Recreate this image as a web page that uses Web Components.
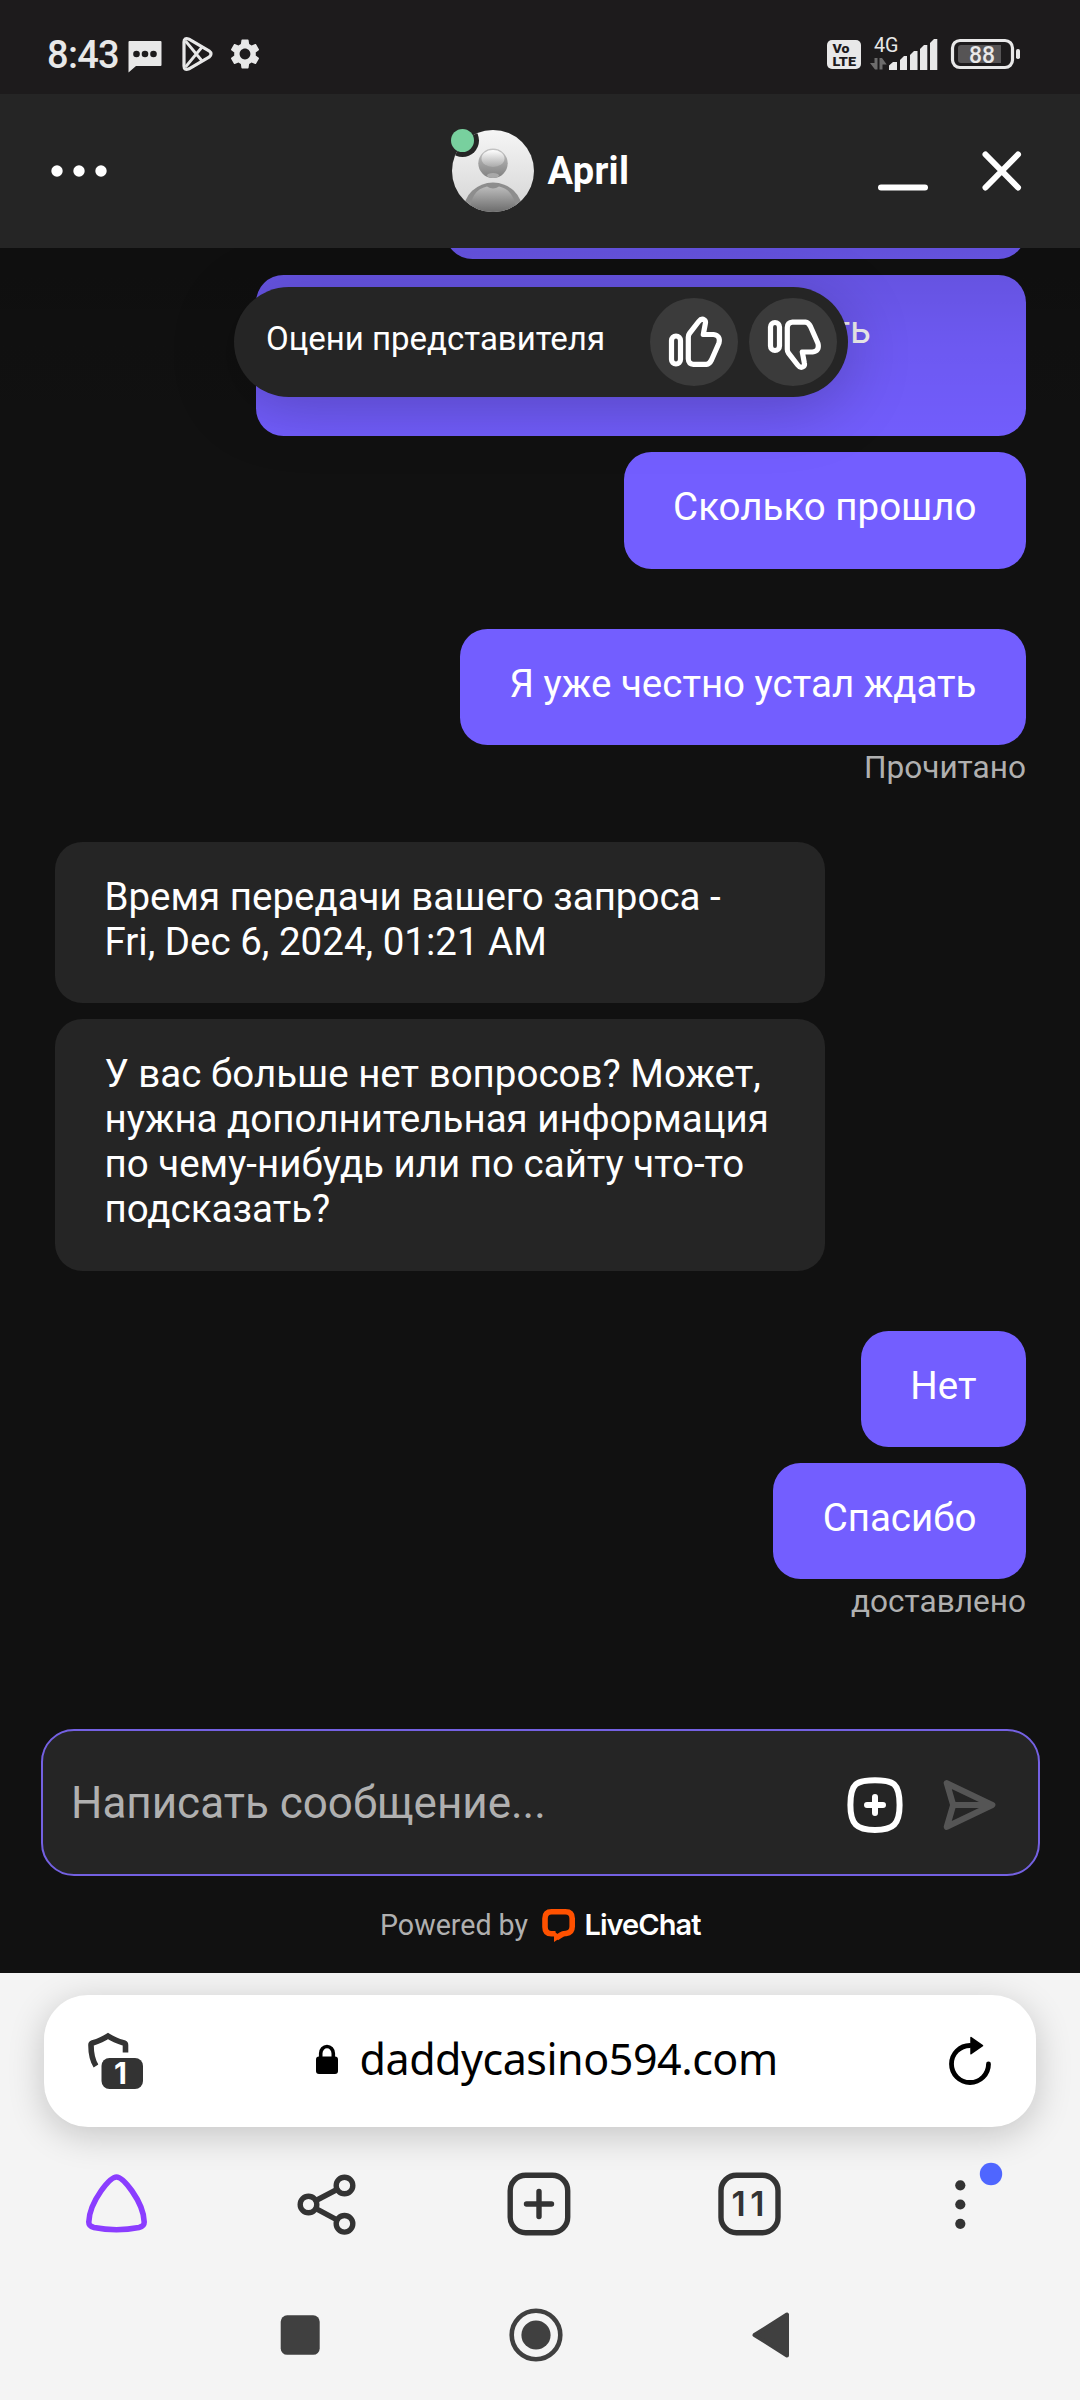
<!DOCTYPE html>
<html lang="ru">
<head>
<meta charset="utf-8">
<title>April</title>
<style>
html,body{margin:0;padding:0;background:#111}
body{width:1080px;height:2400px;overflow:hidden;font-family:Roboto,"Noto Sans",sans-serif}
</style>
</head>
<body>
<phone-screen></phone-screen>
<script>
const define = (name, css, html) => customElements.define(name, class extends HTMLElement {
  constructor() {
    super();
    this.attachShadow({mode: 'open'}).innerHTML =
      `<style>:host{display:block;box-sizing:border-box}*{box-sizing:border-box}svg{display:block;flex:none;overflow:visible}${css}</style>${html}`;
  }
});

define('status-bar', `
:host{display:flex;align-items:flex-start;height:94px;position:relative;z-index:4;background:#1d1b1c;color:#e8e8e8;padding-left:47px}
.clock{font-size:38px;line-height:44px;font-weight:500;width:80px;margin-top:33px;letter-spacing:-.7px;white-space:nowrap}
text{font-family:Roboto,sans-serif}`, `
<span class="clock">8:43</span>
<svg width="35" height="94" viewBox="127 0 35 94"><path fill="#e8e8e8" d="M129.500 41h31q1 0 1 1v23q0 1-1 1h-24.500l-7.500 6.500v-30.500q0-1 1-1z"/><g fill="#1d1b1c"><circle cx="136.500" cy="54" r="3.300"/><circle cx="145" cy="54" r="3.300"/><circle cx="153.500" cy="54" r="3.300"/></g></svg>
<svg width="64" height="94" viewBox="162 0 64 94"><g fill="none" stroke="#e8e8e8" stroke-width="3.200" stroke-linejoin="round"><path d="M184 42q0-5 5-2.800l20 11.600q4 3 0 6.400l-20 11.600q-5 2.200-5-2.800z"/><path d="M185.500 41L202.500 61.500M185.500 67L202.500 46.500" stroke-width="2.800"/></g></svg>
<svg width="40" height="94" viewBox="226 0 40 94"><g transform="translate(227 36) scale(1.500)"><path fill="#e8e8e8" d="M19.140 12.940c.04-.3.060-.610.060-.940 0-.320-.020-.640-.070-.940l2.030-1.580c.180-.140.230-.410.120-.610l-1.920-3.320c-.120-.220-.370-.290-.590-.220l-2.390.960c-.5-.380-1.030-.7-1.620-.940L14.400 2.810c-.040-.240-.240-.410-.480-.410h-3.840c-.24 0-.43.170-.47.410L9.250 5.350C8.660 5.590 8.120 5.920 7.630 6.290L5.240 5.330c-.22-.080-.47 0-.59.220L2.740 8.870c-.12.210-.08.470.12.610l2.030 1.580c-.05.3-.09.630-.09.940s.02.640.07.940l-2.030 1.580c-.18.140-.23.410-.12.610l1.920 3.320c.12.220.37.290.59.220l2.390-.96c.5.380 1.030.7 1.620.94l.36 2.540c.05.240.24.410.48.410h3.840c.24 0 .44-.17.47-.41l.36-2.540c.59-.24 1.130-.56 1.620-.94l2.390.96c.22.080.47 0 .59-.22l1.920-3.320c.12-.22.070-.47-.12-.61L19.140 12.940zM12 15.600c-1.980 0-3.600-1.620-3.600-3.600s1.620-3.600 3.600-3.600 3.600 1.620 3.600 3.600-1.620 3.600-3.600 3.600z"/></g></svg>
<svg style="margin-left:554px" width="48" height="94" viewBox="820 0 48 94"><rect x="827" y="40" width="34" height="29" rx="5" fill="#e8e8e8"/><g fill="#1d1b1c" style="font-weight:900;font-size:12px"><text x="832.500" y="53" textLength="17" lengthAdjust="spacingAndGlyphs">Vo</text><text x="832.500" y="65.500" textLength="23.500" lengthAdjust="spacingAndGlyphs">LTE</text></g></svg>
<svg width="72" height="94" viewBox="868 0 72 94"><text x="874" y="52.300" font-size="20" fill="#e8e8e8" textLength="24.500" lengthAdjust="spacingAndGlyphs">4G</text><path fill="#6d6c6c" d="M874.500 58h3v11.500h-2.500l-5-6.500h4.500zM879.500 69.500h3v-5h4.200l-4.700-6.500h-2.500z"/><g fill="#e8e8e8"><path d="M889 70v-4.500l4-3.500h4v8zM900 70v-10l4-4h3v14zM910 70v-15l4-4h3.500v19zM920 70v-21l4-4h3.300v25zM930 70v-27l4-4h3.300v31z"/></g></svg>
<svg width="90" height="94" viewBox="940 0 90 94"><rect x="952.500" y="40.500" width="60" height="27" rx="7.500" fill="none" stroke="#e8e8e8" stroke-width="3.200"/><path fill="#565455" d="M961 45h40v18h-40q-3 0-3-3v-12q0-3 3-3z"/><rect x="1016" y="49" width="4" height="10" rx="1.800" fill="#e8e8e8"/><text x="969" y="63" font-size="23" font-weight="500" fill="#e8e8e8" textLength="26" lengthAdjust="spacingAndGlyphs">88</text></svg>`);

define('agent-avatar', ``, `
<svg width="86" height="86" viewBox="450 128 86 86">
<defs><linearGradient id="bg" x1="0" y1="0" x2="0" y2="1"><stop offset="0" stop-color="#f6f6f6"/><stop offset="1" stop-color="#d4d4d4"/></linearGradient>
<linearGradient id="hd" x1="0" y1="0" x2="0" y2="1"><stop offset="0" stop-color="#c4c4c4"/><stop offset="1" stop-color="#808080"/></linearGradient>
<linearGradient id="hl" x1="0" y1="0" x2="0" y2="1"><stop offset="0" stop-color="#fff"/><stop offset="1" stop-color="#aaa"/></linearGradient>
<linearGradient id="bd" x1="0" y1="0" x2="0" y2="1"><stop offset="0" stop-color="#bcbcbc"/><stop offset="1" stop-color="#666"/></linearGradient>
<clipPath id="c"><circle cx="493" cy="171" r="41"/></clipPath></defs>
<g clip-path="url(#c)"><rect x="450" y="128" width="86" height="86" fill="url(#bg)"/>
<circle cx="493" cy="163.300" r="14.700" fill="url(#hd)"/><ellipse cx="493" cy="158.500" rx="11.500" ry="8.500" fill="url(#hl)"/><ellipse cx="493" cy="175.500" rx="6" ry="2.500" fill="#a9a9a9"/>
<ellipse cx="493" cy="211" rx="29.500" ry="28.500" fill="#8d8d8d"/><path d="M470 214q0-24 17-27.500 6 4 12 0 17 3.500 17 27.500z" fill="url(#bd)"/>
<circle cx="462.500" cy="140.500" r="16.500" fill="#252525"/></g><circle cx="462.500" cy="140.500" r="11.500" fill="#78d09e"/></svg>`);

define('chat-header', `
:host{display:flex;align-items:center;height:154px;background:#252525;color:#fff;position:relative;z-index:2;padding:0 50px}
.left,.right{flex:1;display:flex;align-items:center}
.right{justify-content:flex-end;gap:48px}
.mid{display:flex;align-items:center;gap:12px;font-size:38px;font-weight:700;line-height:44px}
.mid span{width:83px;letter-spacing:.3px}`, `
<div class="left"><svg width="58" height="12" viewBox="50 165 58 12" fill="#fff"><circle cx="57" cy="171" r="5.700"/><circle cx="79" cy="171" r="5.700"/><circle cx="101" cy="171" r="5.700"/></svg></div>
<div class="mid"><agent-avatar></agent-avatar><span>April</span></div>
<div class="right"><svg width="62" height="50" viewBox="872 146 62 50"><path d="M881 187.500h44" stroke="#fff" stroke-width="6" stroke-linecap="round"/></svg>
<svg width="48" height="50" viewBox="982 146 48 50"><path d="M985.500 154.500l32.500 33M1018 154.500l-32.500 33" stroke="#fff" stroke-width="6" stroke-linecap="round"/></svg></div>`);

define('chat-bubble', `
:host{width:fit-content;max-width:770px;padding:32px 49.500px 39.500px;border-radius:27.500px;background:#252525;color:#fff;font-size:38.500px;line-height:45px}
:host([mine]){background:#735eff;align-self:flex-end}
:host([wide]){width:770px}`, `<slot></slot>`);

define('chat-group', `
:host{display:flex;flex-direction:column;gap:15.800px;margin-bottom:60px}
:host([status]){margin-bottom:0}`, `<slot></slot>`);

define('receipt-note', `
:host{align-self:flex-end;margin-top:-11.100px;height:92.100px;font-size:31.600px;line-height:36px;color:#b0b0b0}`, `<slot></slot>`);

define('rate-button', `
:host{width:88px;height:88px;border-radius:50%;background:#3b3b3b}`, `<slot></slot>`);

define('rate-agent', `
:host{position:absolute;left:234px;top:39px;z-index:3;width:614px;height:110px;border-radius:55px;background:#252525;color:#fff;display:flex;align-items:center;justify-content:space-between;padding:0 11px 0 32px;box-shadow:0 11px 66px rgba(0,0,0,.22)}
span{font-size:33px;line-height:40px;margin-top:-6px}
div{display:flex;gap:11px}
g{fill:none;stroke:#fff;stroke-width:5.200;stroke-linejoin:round}`, `
<span>Оцени представителя</span>
<div><rate-button><svg width="88" height="88" viewBox="650 298 88 88"><g><rect x="671.500" y="336" width="9" height="28" rx="4.500"/><path d="M688.300 337q0-2 1.200-3.600L698.700 321.500Q701.500 317.800 704.500 320Q706 321.200 705.300 323.800L703.300 334.500H713.500Q720.800 335.500 719 343L711.500 360Q709.500 364 706.500 364.300H693.500Q688.500 364 688.300 359Z"/></g></svg></rate-button>
<rate-button><svg width="88" height="88" viewBox="749 298 88 88"><g transform="translate(99 686.500) scale(1 -1)"><rect x="671.500" y="336" width="9" height="28" rx="4.500"/><path d="M688.300 337q0-2 1.200-3.600L698.700 321.500Q701.500 317.800 704.500 320Q706 321.200 705.300 323.800L703.300 334.500H713.500Q720.800 335.500 719 343L711.500 360Q709.500 364 706.500 364.300H693.500Q688.500 364 688.300 359Z"/></g></svg></rate-button></div>`);

define('message-list', `
:host{position:relative;height:1481px;overflow:hidden;padding:0 54px 0 55px}
.list{margin-top:-105.600px;display:flex;flex-direction:column}
.shade{position:absolute;inset:0 0 auto 0;height:210px;background:linear-gradient(rgba(0,0,0,.14),rgba(0,0,0,.06) 45%,transparent)}
.tail{padding-left:526px;display:block;height:90px}`, `
<div class="list">
<chat-group><chat-bubble mine style="width:581px;height:116.500px"></chat-bubble>
<chat-bubble mine wide><span class="tail">ть</span></chat-bubble>
<chat-bubble mine>Сколько прошло</chat-bubble></chat-group>
<chat-group status><chat-bubble mine>Я уже честно устал ждать</chat-bubble><receipt-note>Прочитано</receipt-note></chat-group>
<chat-group><chat-bubble wide>Время передачи вашего запроса -<br>Fri, Dec 6, 2024, 01:21 AM</chat-bubble>
<chat-bubble wide>У вас больше нет вопросов? Может,<br>нужна дополнительная информация<br>по чему-нибудь или по сайту что-то<br>подсказать?</chat-bubble></chat-group>
<chat-group status><chat-bubble mine>Нет</chat-bubble><chat-bubble mine>Спасибо</chat-bubble><receipt-note>доставлено</receipt-note></chat-group>
</div>
<div class="shade"></div>
<rate-agent></rate-agent>`);

define('message-composer', `
:host{display:flex;align-items:center;width:999px;height:147px;margin-left:41px;border:2px solid #7461e2;border-radius:33px;background:#252525;padding:0 36px 0 28px}
svg{margin-top:5px}
span{flex:1;font-size:44px;line-height:52px;color:#b0b0b0;margin-top:1px}`, `
<span>Написать сообщение...</span>
<svg width="64" height="64" viewBox="843 1773 64 64"><g fill="none" stroke="#fff" stroke-width="6" stroke-linecap="round"><path d="M875 1780.200C893 1780.200 899.600 1783 899.600 1805C899.600 1824 893.500 1830 875 1830C856.500 1830 850.400 1824 850.400 1805C850.400 1783 857 1780.200 875 1780.200z"/><path d="M875 1797v16M867 1805h16"/></g></svg>
<svg style="margin-left:32px" width="63" height="64" viewBox="939 1773 63 64"><path d="M946.800 1783.200L992.300 1805L946.800 1826.800L953.200 1805ZM953.200 1805H992" fill="none" stroke="#555" stroke-width="6.200" stroke-linejoin="round"/></svg>`);

define('powered-by', `
:host{display:flex;align-items:center;height:97px;padding-left:380px;color:#b0b0b0;font-size:28.600px}
span{width:162px;line-height:36px}
b{font-family:Inter,sans-serif;font-weight:600;font-size:29px;line-height:36px;letter-spacing:-.950px;color:#fff;margin-left:8.500px}`, `
<span>Powered by</span><svg width="34" height="36" viewBox="542 1907 34 36"><path d="M555.500 1933.800H551.500Q545 1933.800 545 1927V1918.500Q545 1911.800 551.500 1911.800H565.500Q572.200 1911.800 572.200 1918.500V1926.500Q572.200 1932.800 566 1933.500Q563 1933.300 561 1935L556.500 1937.800" fill="none" stroke="#ff5100" stroke-width="5.600"/><path d="M554 1931.500l5 3.500 4 1-9 6z" fill="#ff5100"/></svg><b>LiveChat</b>`);

define('address-bar', `
:host{display:flex;align-items:center;margin:0 44px;height:132px;border-radius:44px;background:#fff;color:#000;box-shadow:0 8px 36px rgba(0,0,0,.2)}
span{font-family:"Noto Sans",sans-serif;font-size:43px;line-height:60px;letter-spacing:-.470px;white-space:nowrap;width:580px;margin-top:-5px;padding-left:1.500px}`, `
<svg width="272" height="132" viewBox="44 1995 272 132"><path d="M125.500 2052.500V2045Q125.500 2043.500 124 2043Q114 2040 108 2036Q102 2040 92.500 2043Q91 2043.500 91 2045Q91 2058 96 2066" fill="none" stroke="#333" stroke-width="5.600"/><rect x="98.500" y="2055" width="48" height="37" rx="11" fill="#fff"/><rect x="101.500" y="2058" width="41.500" height="31" rx="8" fill="#333"/><text x="114" y="2084" font-family="Inter,sans-serif" font-weight="700" font-size="30" fill="#fff">1</text></svg>
<svg width="42" height="132" viewBox="316 1995 42 132"><rect x="316" y="2056.500" width="22" height="17.500" rx="3"/><path d="M320.700 2058v-4.500a6.300 7 0 0 1 12.600 0v4.500" fill="none" stroke="#000" stroke-width="3.600"/></svg>
<span>daddycasino594.com</span>
<svg width="60" height="132" viewBox="938 1995 60 132"><path d="M988.500 2064A18.500 18.500 0 1 1 970 2045.500" fill="none" stroke="#000" stroke-width="4.800" stroke-linecap="round"/><path d="M971 2037.500l11.500 8.200-11.500 8z" stroke="#000" stroke-width="1.500" stroke-linejoin="round"/></svg>`);

define('browser-toolbar', `
:host{display:flex;justify-content:space-between;height:154px;padding:0 73px}
g,.o{fill:none;stroke:#333;stroke-width:5.400;stroke-linecap:round}`, `
<svg width="88" height="154" viewBox="73 2127 88 154"><path d="M116.500 2177C121 2177 127 2184 132 2191C139 2201 144 2213 144.200 2222C144.200 2225 143 2226.500 139 2227.500Q128 2229.700 116.500 2229.700Q105 2229.700 94 2227.500C90 2226.500 88.800 2225 88.800 2222C89 2213 94 2201 101 2191C106 2184 112 2177 116.500 2177z" fill="none" stroke="#8b3dff" stroke-width="5.600"/></svg>
<svg width="88" height="154" viewBox="284.500 2127 88 154"><g><circle cx="344" cy="2185.500" r="8.300"/><circle cx="308" cy="2204.500" r="8.300"/><circle cx="344" cy="2223.800" r="8.300"/><path d="M315.500 2200.500L336.500 2189.500M315.500 2208.700L336.500 2219.800"/></g></svg>
<svg width="88" height="154" viewBox="496 2127 88 154"><g><rect x="510.200" y="2175.200" width="57.500" height="57.500" rx="15.500"/><path d="M539 2191.500v25M526.500 2204h25"/></g></svg>
<svg width="88" height="154" viewBox="707.500 2127 88 154"><rect class="o" x="720.500" y="2175.200" width="57" height="57.500" rx="15.500"/><text x="731" y="2216" font-family="Inter,sans-serif" font-size="33.500" font-weight="600" fill="#333" textLength="33">11</text></svg>
<svg width="88" height="154" viewBox="919 2127 88 154"><g style="fill:#333;stroke:none"><circle cx="960.300" cy="2185.300" r="5.100"/><circle cx="960.300" cy="2204.500" r="5.100"/><circle cx="960.300" cy="2223.800" r="5.100"/></g><circle cx="991" cy="2174" r="11.200" fill="#4f66ff"/></svg>`);

define('system-nav', `
:host{display:flex;justify-content:space-between;height:119px;padding:0 280px 0 270px}
svg{fill:#404040}`, `
<svg width="60" height="119" viewBox="270 2281 60 119"><rect x="280.700" y="2315.300" width="39" height="39.500" rx="6.500"/></svg>
<svg width="64" height="119" viewBox="503 2281 64 119"><circle cx="536" cy="2335" r="24.300" style="fill:none;stroke:#404040;stroke-width:4.600"/><circle cx="536" cy="2335" r="14.600"/></svg>
<svg width="60" height="119" viewBox="740 2281 60 119"><path d="M754.500 2335L787 2314.500V2355.500z" stroke="#404040" stroke-width="4" stroke-linejoin="round"/></svg>`);

define('phone-screen', `
:host{width:1080px;height:2400px;background:#111;display:flex;flex-direction:column}
.browser{background:#f4f4f4;height:427px;padding-top:22px;overflow:hidden}`, `
<status-bar></status-bar><chat-header></chat-header><message-list></message-list><message-composer></message-composer><powered-by></powered-by>
<div class="browser"><address-bar></address-bar><browser-toolbar></browser-toolbar><system-nav></system-nav></div>`);
</script>
</body>
</html>
